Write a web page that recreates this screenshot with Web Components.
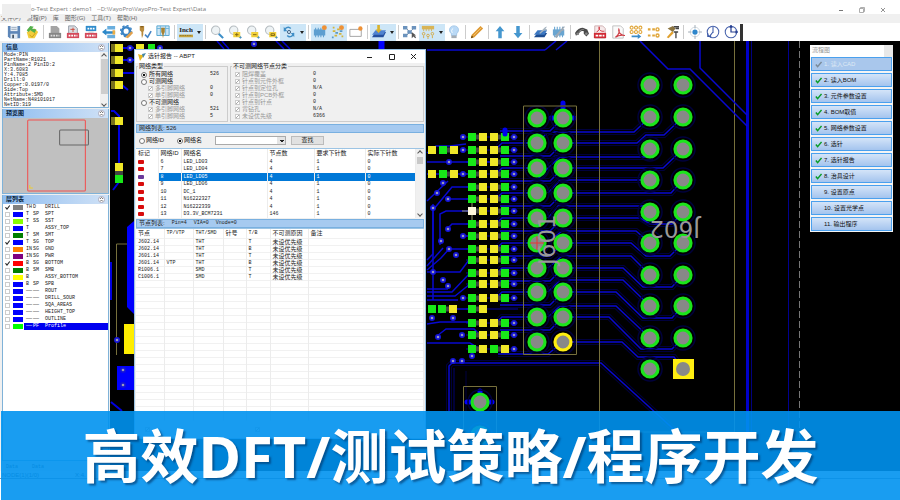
<!DOCTYPE html>
<html>
<head>
<meta charset="utf-8">
<title>VayoPro-Test Expert</title>
<style>
html,body{margin:0;height:100%;overflow:hidden}
body{font-family:"Liberation Sans","Noto Sans CJK SC",sans-serif;font-size:6px;line-height:7px;color:#222;background:#fff}
</style>
</head>
<body>
<app-shell>
  <tool-bar slot="tools"></tool-bar>
  <side-bar slot="side"></side-bar>
  <pcb-board slot="board">
    <net-dialog></net-dialog>
    <flow-panel></flow-panel>
  </pcb-board>
  <promo-banner slot="banner">高效DFT/测试策略/程序开发</promo-banner>
</app-shell>
<script>
const define = (name, html) => customElements.define(name, class extends HTMLElement {
  connectedCallback() {
    if (this.shadowRoot) return;
    const root = this.attachShadow({mode: 'open'});
    root.innerHTML = typeof html === 'function' ? html(this) : html;
  }
});

/* Shared look of small radios, tick boxes and monospaced runs */
const base = `
*{box-sizing:border-box}
button,select,input{font:inherit;color:inherit;margin:0;padding:0}
input{appearance:none;flex:none;width:6px;height:6px;background:#fff;border:1px solid #777}
input[type=radio]{border-radius:50%}
input[type=radio]:checked{background:radial-gradient(#111 40%,#fff 50%)}
.mono{font-family:"Liberation Mono","Noto Sans CJK SC",monospace;font-size:5px}
`;

const glass = (extra = '') => `<path d="M10 10l5 5" stroke="#3d8fc8" stroke-width="2.4"/><circle cx="6.5" cy="6" r="4.8" fill="#eef3f5" stroke="#b5bcc0" stroke-width="1.2"/>${extra}`;
const tag = t => `<path d="M6 8h8v6H6z" fill="#f0cf3a"/><path d="${t}" stroke="#7a6210" fill="none"/>`;
const icons = {
  save: '<path d="M1 1h14v14H3l-2-2z" fill="#5d86b8"/><path d="M4 1h8v6H4z" fill="#e8eef6"/><path d="M4 10h8v5H4z" fill="#dfe8f2"/><path d="M5 3h6M5 5h6" stroke="#9ab"/><path d="M6 11h2v4H6z" fill="#456"/>',
  open: '<path d="M2 8l9-4 4 4-4 7H4z" fill="#f2cd3c"/><path d="M2 6l4-5 4 1-2 2 5 1-2 4-5-3-2 2z" fill="#53b04b"/><path d="M5 11l3 3 4-5" stroke="#c89a18" fill="none"/>',
  doc: '<path d="M3 1h7l3 3v6H3z" fill="#a4a4a4"/><path d="M1 9h14v6H1z" fill="#858585"/><path d="M3 12h10" stroke="#ddd" stroke-width="2" stroke-dasharray="2 1"/>',
  cad: '<path d="M3 1h7l3 3v6H3z" fill="#d9dde2" stroke="#8b95a0"/><path d="M5 5h5M8 3v5" stroke="#c43"/><path d="M1 9h14v6H1z" fill="#d44a5c"/><path d="M3 12h10" stroke="#fff" stroke-width="2" stroke-dasharray="2 1"/>',
  cad2: '<path d="M2 1h12v6H2z" fill="#2f8ccc"/><path d="M4 4h8" stroke="#fff" stroke-width="2" stroke-dasharray="2 1"/><path d="M5 7h6v3H5z" fill="#d9dde2"/><path d="M1 9h14v6H1z" fill="#d44a5c"/><path d="M3 12h10" stroke="#fff" stroke-width="2" stroke-dasharray="2 1"/>',
  flow: '<path d="M6 1h9v4H6zM6 11h9v4H6z" fill="#69aede"/><path d="M0 8l5-4v3h10v3H5v2z" fill="#2c88c9"/><path d="M12 6h3v5h-3z" fill="#e9ad45"/>',
  gear: '<circle cx="7" cy="7" r="4.4" fill="none" stroke="#3a83c4" stroke-width="3"/><circle cx="7" cy="7" r="6.3" fill="none" stroke="#3a83c4" stroke-width="1.6" stroke-dasharray="2.5 2.4"/><path d="M6 14l7-7 2 2-6 6z" fill="#e3a04a"/>',
  pin: '<path d="M2 1h5v5l-1 2v3l-1.500 4L4 11V8L2 6z" fill="#b88a3c"/><path d="M3 2h3" stroke="#6b4a12"/><path d="M8 11l3 3 4-7" fill="none" stroke="#4383c5" stroke-width="1.800"/>',
  pins: '<path d="M1 1h14v11H1z" fill="#cfe6f5" stroke="#4aa0ce"/><path d="M1 4h14M5 1v11M11 1v11" stroke="#69b3da"/><path d="M6 3h4v5l-1 2-1 5-1-5-1-2z" fill="#a88232"/>',
  inch: '<text x="8" y="8" text-anchor="middle" font-family="Liberation Serif" font-weight="bold" font-size="8" fill="#222">Inch</text><path d="M0 11h16v3H0z" fill="#c8a43c"/><path d="M1 12h14" stroke="#7e6c28" stroke-dasharray="1 1"/>',
  zoom: glass(), zoomIn: glass(tag('M8 11h4M10 9v4')), zoomOut: glass(tag('M8 11h4')), zoomFit: glass(tag('M8 10h4v2H8z')),
  rotate: '<path d="M3 7a4 4 0 017-3M13 9a4 4 0 01-7 3" fill="none" stroke="#3f8ec7" stroke-width="1.600"/><path d="M2 2v5h4zM14 14V9h-4z" fill="#3f8ec7"/><circle cx="8" cy="8" r="1.800" fill="none" stroke="#357"/>',
  chip: '<path d="M1 5h13v7H1z" fill="#5e9fd0"/><path d="M3 3v11M6 3v11M9 3v11M12 5v9" stroke="#5e9fd0" stroke-width="1.200"/><circle cx="13" cy="3" r="2.800" fill="#ee9136"/>',
  dots: '<path d="M2 7h3M7 5h3M4 12h3M9 10h3M12 13h2M2 3h2" stroke="#d4b53c" stroke-width="2"/><path d="M5 9h3M10 7h3M1 14h2" stroke="#5c9ac6" stroke-width="2"/><circle cx="12" cy="3" r="2.800" fill="#ee9136"/>',
  frame: '<path d="M1 5h13v8H1z" fill="#fff" stroke="#9a9a9a"/><circle cx="13" cy="4" r="2.500" fill="#ee9136"/>',
  layers: '<path d="M4 8h12l-3 6H0z" fill="#234f9e"/><path d="M4 6h12l-3 5H0z" fill="#4f83d0"/><path d="M6 0h3v5h2L7.500 9 4 5h2z" fill="#d8b22c"/>',
  nodes: '<path d="M3 3l10 10M13 3L3 13" stroke="#7b8794"/><path d="M0 1h5v4H0zM10 1h5v4h-5zM0 10h5v4H0zM5 6h5v4H5z" fill="#6b93bd"/><path d="M10 8v7l2-2 2 2 1-1-2-2h2z" fill="#555"/>',
  probes: '<path d="M1 1h14v4H1z" fill="#d8b456"/><path d="M3 4v3M6 4v3M9 4v3M12 4v3" stroke="#d8b456"/><g fill="none" stroke="#d4a63c"><circle cx="3" cy="10" r="1.500"/><circle cx="8" cy="12" r="1.500"/><circle cx="13" cy="10" r="1.500"/><path d="M3 12v3M8 14v2M13 12v3"/></g>',
  bulb: '<path d="M5 10C1 6 3 1 8 1s7 5 3 9v2H5z" fill="#b9d9f6" stroke="#9cc2e6"/><path d="M7 4c-2 1-2 3-1 5" stroke="#fff" fill="none"/><path d="M5 12h6v3H5z" fill="#a4acb4"/>',
  pencil: '<path d="M2 11L12 1l3 3L5 14l-4 1z" fill="#dd9832"/><path d="M4 12l9-9" stroke="#f6c873"/><path d="M1 15l1-3 2 2z" fill="#67450f"/>',
  up: '<path d="M8 1l5 6h-3v8H6V7H3z" fill="#4597cf"/>',
  down: '<path d="M8 15l5-6h-3V1H6v8H3z" fill="#4597cf"/>',
  board: '<path d="M4 9h11l-3 5H0z" fill="#1c4c91"/><path d="M4 6h11l-3 5H0z" fill="#3c78c2"/><path d="M6 9l6-6a3 3 0 013-1l-2 2 2 1a3 3 0 01-3 1l-5 4z" fill="#a6b4c0"/>',
  board2: '<path d="M1 5h13v7H1z" fill="#69a5d1"/><path d="M3 2v12M6 2v12M9 2v12M12 2v12" stroke="#69a5d1" stroke-width="1.200"/><path d="M3 13l8-9a3 3 0 014-2l-2 2 1 2-3 1-6 8z" fill="#9caab7"/>',
  find: '<path d="M0 9c2-4 6-6 9-6l5 2 2 5-3 3-3-3V7c-3-1-5 1-6 4l-3 1z" fill="#4a4a4a"/><path d="M4 8c2-2 4-3 6-3" stroke="#999" fill="none"/><circle cx="3" cy="10" r="1.500" fill="#888"/><circle cx="13" cy="10" r="1.500" fill="#888"/>',
  pdf: '<path d="M2 1h9l3 3v11H2z" fill="#f6e9ea" stroke="#c9a9aa"/><path d="M1 9h14v6H1z" fill="#d02a34"/><path d="M4 8c3-1 4-5 3-6-1 3 2 6 6 5" fill="none" stroke="#d02a34"/><path d="M3 12h10" stroke="#fff" stroke-width="2" stroke-dasharray="3 1"/>',
  pdf2: '<path d="M2 1h9l3 3v11H2z" fill="#fafafa" stroke="#bbb"/><path d="M5 14c4-2 5-7 4-9-1 4 3 7 7 7-5-1-8 0-11 2z" fill="none" stroke="#cc3a42" stroke-width="1.300"/>',
  ring: '<g fill="none" stroke="#e0a63a" stroke-width="1.300"><circle cx="3" cy="3" r="1.700"/><circle cx="8" cy="3" r="1.700"/><circle cx="13" cy="3" r="1.700"/><circle cx="3" cy="8" r="1.700"/><circle cx="8" cy="8" r="1.700"/><circle cx="13" cy="8" r="1.700"/></g><path d="M3 12h7v-2l4 3-4 3v-2H3z" fill="#3a8cc8"/>',
  match: '<g fill="none" stroke="#e0a63a" stroke-width="1.600"><circle cx="12" cy="5" r="1.700"/><circle cx="12" cy="12" r="1.700"/><path d="M1 5h3M6 5h3M1 12h3M6 12h3" stroke-width="2.400"/></g>',
  tool: '<path d="M2 14l6-7 2 2-6 6z" fill="#e0a02e"/><path d="M3 4l6-3 3 3-3 4z" fill="#8b7440"/><path d="M10 2h6M12 4h4M10 8h5M12.500 8v7" stroke="#444" stroke-width="1.500"/>',
  target: '<circle cx="8" cy="8" r="5.500" fill="none" stroke="#ccd4da"/><circle cx="8" cy="8" r="3" fill="#2e86cb"/><path d="M8 0v4M8 12v4M0 8h4M12 8h4" stroke="#9aa6b0"/>',
  compass: '<circle cx="8" cy="8" r="6.600" fill="none" stroke="#4a65ad" stroke-width="1.200"/><path d="M8 2v7M8 8l-4 5M2 9v4h4" fill="none" stroke="#3a59a8" stroke-width="1.200"/>',
  axis: '<circle cx="8" cy="8" r="6.600" fill="none" stroke="#4a65ad" stroke-width="1.200"/><path d="M8 0v8h8" fill="none" stroke="#263f90" stroke-width="1.400"/><path d="M6 3l2-3 2 3zM13 6l3 2-3 2z" fill="#263f90"/>'
};

define('tool-button', el => {
  const name = el.getAttribute('icon');
  return `<style>${base}
  :host{display:flex;flex:none;height:17px}
  :host([active]){background:#cde6f7}
  button{border:0;background:none;display:grid;place-items:center}
  .main{width:18px}.more{width:8px}
  svg{display:block;width:14px;height:14px}
  .more svg{width:4px;height:3px}</style>
  <button class="main" aria-label="${name}"><svg viewBox="0 0 16 16">${icons[name]}</svg></button>
  ${el.hasAttribute('menu') ? `<button class="more" aria-label="${name} options"><svg viewBox="0 0 4 3"><path d="M0 0h4L2 3z" fill="#222"/></svg></button>` : ''}`;
});

define('tool-bar', () => {
  const items = 'save open | doc cad cad2 flow gear pin pins | inch*+ | zoom zoomIn zoomOut zoomFit rotate*+ | chip* dots* frame | layers*+ | nodes probes*+ bulb | pencil | up down | board board2 | find pdf pdf2 ring match tool | target compass axis'.split(' ');
  return `<style>${base}
  :host{display:flex;background:#fff;border-bottom:1px solid #888;padding-left:5px;height:18px;overflow:hidden;align-items:center}
  i{flex:none;width:1px;height:14px;background:#ccc;margin:0 2px}
  b{flex:none;width:3px;height:17px;background:#333}</style>` +
  items.map(i => i === '|' ? '<i></i>' : `<tool-button icon="${i.replace(/[*+]/g, '')}"${i.includes('*') ? ' active' : ''}${i.includes('+') ? ' menu' : ''}></tool-button>`).join('') + '<b></b>';
});

define('side-section', el => `<style>${base}
  :host{display:flex;flex-direction:column;min-height:0;border:1px solid #7fb2d8;border-top:0}
  header{display:flex;flex:none;align-items:center;justify-content:space-between;height:9px;padding:0 3px;background:linear-gradient(90deg,#8fbdf0,#cfe1f6)}
  h2{margin:0;font-size:6px;line-height:9px;color:#0a1e3a}
  button{width:7px;height:7px;border:1px solid #aab;border-radius:50%;background:#fff;display:grid;place-items:center}
  svg{width:3px;height:5px}
  .body{flex:1;min-height:0;display:flex;flex-direction:column;background:#fff}</style>
  <header><h2>${el.getAttribute('heading')}</h2><button aria-label="collapse"><svg viewBox="0 0 3 5"><path d="M0 2l1.500-1.500L3 2M0 4.500L1.500 3 3 4.500" fill="none" stroke="#444" stroke-width=".7"/></svg></button></header>
  <div class="body"><slot></slot></div>`);

define('layer-list', () => {
  const layers = [['#808080','TH','D','DRILL',1],['#00f','T','SP','SPT'],['#8f0','T','SS','SST'],['#00f','T','','ASSY_TOP'],['#007f00','T','SM','SMT'],['#00f','T','SG','TOP',1],['#ff8000','IN','SG','GND'],['#800080','IN','SG','PWR'],['#f00','B','SG','BOTTOM',1],['#007f00','B','SM','SMB'],['#ff0','B','','ASSY_BOTTOM'],['#00f','B','SP','SPB'],['#00f','——','——','ROUT'],['#00f','——','——','DRILL_SOUR'],['#00f','——','——','SQA_AREAS'],['#00f','——','——','HEIGHT_TOP'],['#00f','——','——','OUTLINE'],['#0f0','——','PF','Profile',0,1]];
  return `<style>${base}
  :host{display:block;flex:1}
  ul{margin:0;padding:0;list-style:none}
  label{display:grid;grid-template-columns:9px 10px 1fr;align-items:center;height:7px;gap:1px}
  input{width:5px;height:5px;border-color:#ccc;justify-self:center}
  input:checked{border:0;background:#222;clip-path:polygon(0 50%,20% 40%,40% 65%,90% 0,100% 20%,40% 100%)}
  .sw{height:5px}
  .t{display:grid;grid-template-columns:7px 12px 1fr;padding-left:2px;line-height:7px}
  .sel{background:#0000f0;color:#fff}</style><ul class="mono">` +
  layers.map(([c, a, b, n, on, sel]) => `<li><label><input type="checkbox"${on ? ' checked' : ''}><span class="sw" style="background:${c}"></span><span class="t${sel ? ' sel' : ''}"><span>${a}</span><span>${b}</span><span>${n}</span></span></label></li>`).join('') + '</ul>';
});

define('side-bar', () => {
  const info = ['Mode:PIN','PartName:R1021','PinName:2 PinID:2','X:3.6083','Y:4.7085','Drill:0','Copper:0.0197/0','Side:Top','Attribute:SMD','NetName:N48101017','NetID:319'];
  return `<style>${base}
  :host{display:flex;flex-direction:column;gap:1px;width:107px;background:#f0f0f0;padding:2px 1px 0 2px;height:100%}
  .info{height:65px}.map{height:85px}.layers{flex:1}
  .rows{display:grid;grid-template-columns:1fr 8px;min-height:0;overflow:hidden;flex:1}
  .rows .mono{padding-top:1px}
  .rows p{margin:0;padding-left:1px;line-height:5px;white-space:nowrap}
  .bar{display:flex;flex-direction:column;align-items:center;justify-content:space-between;background:#f0f0f0;padding:2px 0}
  .bar::before,.bar::after{content:"";width:3px;height:3px;border:solid #555;border-width:1px 0 0 1px;rotate:45deg}
  .bar::after{rotate:225deg}
  .bar span{flex:1;width:7px;background:#cdcdcd;margin:1px 0 8px}
  svg{display:block;width:100%;height:100%;background:#c0c0c0}
  nav{display:flex;gap:14px;padding:0 4px;height:11px;align-items:center}
  nav a{color:#345;text-decoration:none}</style>
  <side-section class="info" heading="信息"><div class="rows"><div class="mono">${info.map(t => `<p>${t}</p>`).join('')}</div><div class="bar"><span></span></div></div></side-section>
  <side-section class="map" heading="预览图"><svg viewBox="0 0 102 75" preserveAspectRatio="none"><rect x="24" y="2" width="56" height="71" rx="1" fill="none" stroke="#f05050"/><rect x="55" y="12" width="28" height="15" rx="1" fill="none" stroke="#666"/><path d="M26 67v3h3" fill="none" stroke="#ec3"/></svg></side-section>
  <side-section class="layers" heading="层列表"><layer-list></layer-list></side-section>
  <nav class="mono"><a href="#layer">Data</a><a href="#data">Data</a></nav>`;
});

/* Board drawing; coordinates are those of the whole window */
define('pcb-board', () => {
  let s = '';
  const box = (x, y, c) => `<rect x="${x - 4}" y="${y - 4}" width="8" height="8" fill="${c}"/>`;
  const G = '#18e818', Y = '#f0e828';
  const via = (x, y) => `<circle cx="${x}" cy="${y}" r="3" fill="#1414d8"/><circle cx="${x}" cy="${y}" r="1.300" fill="#99b"/>`;
  const pair = (x, y, a, b) => `<path d="M${x + 4} ${y}h4" stroke="#444" stroke-width="5"/>` + box(x, y, a) + box(x + 11, y, b);
  const line = (d, w = 1.5, c = '#0808d0') => `<path d="${d}" fill="none" stroke="${c}" stroke-width="${w}"/>`;
  const halo = d => line(d, 6, '#00003c') + line(d, 4, '#000') + line(d);
  const rows = [137,150,162,174,187,199,211,224,236,249,260,273,284,298,309,323,335,349];
  const pads = [118,143,168,193,218,243,268,292,317,342];
  const far = [85,117,149,180,212,243,275,306,338,369];
  /* connector to connector traces */
  ['M537 143L548 132H634L650 117','M563 143H637L646 135H664L683 117','M510 156H548L560 156',
   'M537 180L558 157','M548 168L560 157H650L650 149','M563 168H663L683 149','M548 193L560 180H650','M563 193H671L683 180',
   'M548 218L558 206H650','M563 218H640L650 224H672L683 212','M548 242L562 231H636L650 243','M563 243H631L646 256H670L683 243',
   'M548 268L562 256H631L650 275','M563 268H623L643 287H672L683 275','M548 292L560 280H623L650 306','M563 292H616L643 318H672L683 306',
   'M548 317L560 306H616L650 338','M563 317H609L641 349H672L683 338','M563 342H622L638 357H674L683 368',
   'M498 354H548L563 342'].forEach(d => s += halo(d));
  /* fan-out from the resistor columns */
  pads.forEach((y, i) => { if (i && i < 9) s += halo(`M498 ${y + 4}L502 ${y}H536`); if (i < 9) s += halo(`M500 ${y + 13}H550L563 ${y}`); });
  rows.forEach(y => s += line(`M466 ${y}H518`, 1.2, '#0505a0'));
  ['M427 153L436 146H450L466 144', 'M427 162H505', 'M427 174H470', 'M427 201L448 181', 'M433 204V300', 'M427 260L433 254V210L452 187H470',
    'M440 245V214L446 211H470', 'M427 270L441 258L449 249H470','M427 266L443 248','M427 272H460L469 260','M427 292H452L470 273','M427 296H455L470 284','M427 300H458',
    'M427 324L440 322H470','M437 336L446 329H474L480 335','M427 343H470L480 349','M427 289L448 289','M448 199H470','M448 228L452 224H470','M462 236H470','M449 309H480'].forEach(d => s += line(d));
  s += halo('M449 411V366L452 363H601L680 435') + line('M454 411V368', 1, '#000070');
  s += line('M466 411V371', 1, '#000040');
  rows.forEach((y, i) => {
    s += pair(472, y, G, Y);
    if (i === 14) return;
    s += pair(494, y, i === 17 ? G : Y, i === 17 ? Y : G) + via(514, y);
  });
  [150,174].forEach(y => s += box(432, y, Y) + pair(443, y, G, Y) + via(463, y));
  s += box(432, 309, G) + pair(442, 309, G, Y) + via(432, 318) + via(453, 318);
  s += box(472, 211, '#fff8dc') + line('M462 211H468M472 203V207M472 215V220', 1, '#996');
  [[463,137],[449,162],[443,183],[437,193],[433,208],[448,199],[448,229],[441,241],[463,236],[449,249],[456,255],[433,272],[443,280],[448,286],[463,298],[438,337],[462,335],[472,356],[453,361],[462,361]].forEach(p => s += via(...p));
  s += '<path d="M505 130v4M563 103v8M551 118h23" stroke="#00e" stroke-width="5" stroke-linecap="round"/>';
  const pad = (x, y, c = '#1be51b') => `<circle cx="${x}" cy="${y}" r="12" fill="none" stroke="#00003c" stroke-width="1.500"/><circle cx="${x}" cy="${y}" r="8" fill="#888" stroke="${c}" stroke-width="3.200"/>`;
  pads.forEach((y, i) => s += pad(537, y) + pad(563, y, i === 9 ? '#ffee10' : undefined));
  far.forEach((y, i) => s += pad(650, y) + (i < 9 ? pad(683, y) : `<rect x="673" y="359" width="21" height="20" fill="#fe1"/><circle cx="683" cy="369" r="7" fill="#888"/>`));
  s += line('M530 243h14M537 236v14', 1, '#e33');
  s += '<path d="M467 402h25M480 391v12" stroke="#00f" stroke-width="5" stroke-linecap="round"/>' + pad(480, 402) + pad(480, 435);
  const olive = '#77703c';
  s += line('M523.500 354.500V106H576.500V354.500zM463.500 440V386.500H496.500V440M599.500 41V432H734.500V41', 1, olive);
  s += line('M747.500 41V440', 3, '#0000c8') + line('M751.500 41V440', 1, '#000080') + line('M788.500 41V440', 1, '#000090');
  s += '<path d="M799.500 41V470" stroke="#777" stroke-dasharray="7 3"/>';
  /* upper right diagonals */
  ['M545 50L556 41', 'M556 50L567 41', 'M427 50H520L545 50','M700 41V68L747 115','M640 41L668 69H690L747 126'].forEach(d => s += line(d));
  /* left strip */
  ['M111 48H134','M111 60H134','M111 73H134','M111 85H122L128 90','M111 111H114L119 116V165','M113 190L119 182M111 402L122 411','M111 262V300'].forEach(d => s += line(d, 2, '#0000e0'));
  [48,60,73,85,121].forEach(y => s += `<rect x="111" y="${y - 4}" width="4" height="8" fill="#77701c"/>` + box(119, y, Y));
  s += via(130, 48) + via(130, 60) + box(119, 167, Y) + '<path d="M115 171h8v4h-8z" fill="#444"/>' + box(119, 179, G);
  s += line('M134 244H116.500V355', 1, olive) + '<path d="M134 221l-7 6v80l7 7zM117 366h17v24h-17z" fill="#00f"/><path d="M124 324h10v30h-10z" fill="#fe0"/>' + via(117, 340) + via(123, 370) + via(123, 385);
  s += line('M217 41L224 49M222 41L229 49M276 41L284 49M282 41L290 49', 1.5, '#00c') + line('M381.500 41V49', 6, '#00f') + via(254, 44) + via(160, 48) + '<path d="M136 44h8v5h-8z" fill="#f0e828"/><path d="M148 44h7v5h-7z" fill="#18e818"/>';
  return `<style>:host{display:block;position:relative;overflow:hidden;background:#000;height:100%}
  .art{display:block;width:100%;height:100%}
  ::slotted(net-dialog){position:absolute;left:24px;top:8px}
  ::slotted(flow-panel){position:absolute;right:7px;top:4px}</style>
  <svg class="art"><g transform="translate(-110 -41)">${s}
  <g font-family="DejaVu Sans" font-size="23" fill="#999"><text transform="translate(700 221) rotate(180)">J602</text><text transform="translate(555 265) rotate(-90)">J601</text></g></g></svg><slot></slot>`;
});

define('net-dialog', () => {
  const opt = (type, txt, val, cls = '', on = 1) => `<div class="row ${cls}"><label><input type="${type}" ${type === 'radio' ? 'name="kind"' : 'disabled'}${on ? ' checked' : ''}>${txt}</label><span class="mono">${val}</span></div>`;
  const nets = [[6,'LED_LD03',4],[7,'LED_LD04',4],[8,'LED_LD05',4],[9,'LED_LD06',4],[10,'DC_1',4],[11,'N16222327',4],[12,'N16222339',4],[13,'D3.3V_BCM7231',146]];
  const nodes = [['J602.14','','THT','','T'],['J602.14','','THT','','B'],['J601.14','','THT','','T'],['J601.14','VTP','THT','','B'],['R1006.1','','SMD','','T'],['C1006.1','','SMD','','T']];
  return `<style>${base}
  :host{display:flex;flex-direction:column;width:292px;box-sizing:border-box;background:#f0f0f0;border:1px solid #9cc4e4;color:#222}
  .title{display:flex;align-items:center;height:13px;background:#fff;padding:0 1px 0 3px;gap:2px}
  .title svg{width:8px;height:8px}.title b{flex:1;font-weight:400}
  .title button{width:20px;height:12px;border:0;background:none;display:grid;place-items:center}
  .groups{display:grid;grid-template-columns:92px 1fr;gap:2px;padding:0 1px}
  fieldset{margin:0;padding:1px 3px 1px 4px;border:1px solid #ccc;min-width:0}
  legend{padding:0 1px;margin-left:-3px;line-height:7px}
  .row{display:flex;height:7px;align-items:center}
  .row label{display:flex;align-items:center;gap:2px;width:69px;white-space:nowrap}
  .sub label{padding-left:7px;color:#999}
  .wide label{width:78px}
  .wide.sub label{padding:0}
  input[type=checkbox]{width:5px;height:5px;border-color:#ccc;background:linear-gradient(135deg,#fff 35%,#aaa 40% 60%,#fff 65%)}
  h3{margin:2px 1px 0;height:9px;line-height:7px;border:1px solid #79b0e0;background:#a6caf0;font-size:6px;font-weight:400;padding-left:2px}
  h3.mono{display:flex;gap:7px;margin-top:1px;font-size:5px}
  .cj{font-family:"Liberation Sans","Noto Sans CJK SC",sans-serif;font-size:6px}
  .find{display:flex;align-items:center;height:15px;padding:0 4px}
  .find label{display:flex;align-items:center;gap:1px;width:38px}
  select{appearance:none;width:71px;height:9px;border:1px solid #aaa;background:linear-gradient(#222,#222) 64px 3px/4px 1px no-repeat,linear-gradient(#222,#222) 65px 4px/2px 1px no-repeat,linear-gradient(#e4e4e4,#e4e4e4) right/8px 100% no-repeat,#fff}
  .find button{width:33px;height:9px;margin-left:5px;border:1px solid #bbb;background:#e1e1e1;line-height:7px}
  .list{display:grid;grid-template-columns:1fr 8px;background:#fff;margin:0 1px;border-top:1px solid #9cc4e4}
  table{border-collapse:collapse;table-layout:fixed;width:100%;background:#fff}
  th{font-weight:400;text-align:left;height:9px;padding:0 0 0 2px;font-size:6px;line-height:7px;white-space:nowrap}
  td{padding:0 0 0 2px;line-height:6px;height:7px;font-size:5px;white-space:nowrap}
  th,td{border-right:1px solid #ececec}
  .nets{height:69px}.nets td{height:auto}
  .nets i{display:block;width:6px;height:4px;border-radius:1px;background:#d80c0c}
  .sel td{background:#0078d7;color:#fff}.sel td:first-child{background:#fff}.sel i{background:#6a3a9a}
  .nodes{margin:0 1px;background:#fff;border-top:1px solid #9cc4e4}
  .nodes tr{border-bottom:1px solid #f1f1f1}
  .nodes th.mono{font-size:5px}
  .nodes td.cj{font-size:6px}
  .sb{background:#f0f0f0;display:flex;flex-direction:column;align-items:center;padding:2px 0}
  .sb::before,.sb::after{content:"";width:3px;height:3px;border:solid #555;border-width:1px 0 0 1px;rotate:45deg}
  .sb::after{rotate:225deg;margin-top:auto}
  .sb span{width:6px;height:7px;background:#c8c8c8;margin-top:2px}
  footer{display:flex;gap:105px;padding:6px 10px}</style>
  <div class="title"><svg viewBox="0 0 8 8"><path d="M0 1l3 1 4-1-3 4-2 3z" fill="#e8b820"/><path d="M4 1l4-1-3 5z" fill="#48a"/></svg><b>选针报告 -- ABPT</b>
  <button aria-label="minimize"><svg viewBox="0 0 8 8"><path d="M1 4.500h5" stroke="#222"/></svg></button><button aria-label="maximize"><svg viewBox="0 0 8 8"><path d="M1.500 1.500h5v5h-5z" fill="none" stroke="#222"/></svg></button><button aria-label="close"><svg viewBox="0 0 8 8"><path d="M1 1l5 5M6 1L1 6" stroke="#222"/></svg></button></div>
  <div class="groups"><fieldset><legend>网络类型</legend>${opt('radio','所有网络',526)}${opt('radio','可测网络','','',0)}${opt('checkbox','多引脚网络',0,'sub')}${opt('checkbox','单引脚网络',0,'sub')}${opt('radio','不可测网络','','',0)}${opt('checkbox','多引脚网络',521,'sub')}${opt('checkbox','单引脚网络',5,'sub')}</fieldset>
  <fieldset><legend>不可测网络节点分类</legend>${[['阻焊覆盖',0],['针点到元件外框',0],['针点到定位孔','N/A'],['针点到PCB外框',0],['针点到针点',0],['背钻孔','N/A'],['未设优先级',6366]].map(r => opt('checkbox', r[0], r[1], 'wide sub')).join('')}</fieldset></div>
  <h3>网络列表: 526</h3>
  <div class="find"><label><input type="radio" name="by">网络ID</label><label><input type="radio" name="by" checked>网络名</label><select aria-label="网络名"><option></option></select><button>查找</button></div>
  <div class="list"><table class="nets"><colgroup><col style="width:22px"><col style="width:23px"><col style="width:86px"><col style="width:47px"><col style="width:51px"><col></colgroup><thead><tr>${['标记','网络ID','网络名','节点数','要求下针数','实际下针数'].map(t => `<th>${t}</th>`).join('')}</tr></thead>
  <tbody class="mono">${nets.map(n => `<tr${n[0] === 8 ? ' class="sel"' : ''}><td><i></i></td><td>${n[0]}</td><td>${n[1]}</td><td>${n[2]}</td><td>1</td><td>0</td></tr>`).join('')}</tbody></table><div class="sb"><span></span></div></div>
  <h3 class="mono"><span class="cj">节点列表:</span><span>Pin=4</span><span>VIA=0</span><span>Vnode=0</span></h3>
  <div class="nodes"><table><colgroup><col style="width:28px"><col style="width:29px"><col style="width:30px"><col style="width:23px"><col style="width:24px"><col style="width:38px"><col></colgroup><thead><tr>${['节点','TP/VTP','THT/SMD','针号','T/B','不可测原因','备注'].map(t => `<th${/^T/.test(t) ? ' class="mono"' : ''}>${t}</th>`).join('')}</tr></thead>
  <tbody class="mono">${nodes.map(n => `<tr>${n.map(c => `<td>${c}</td>`).join('')}<td class="cj">未设优先级</td><td></td></tr>`).join('')}${('<tr>' + '<td></td>'.repeat(7) + '</tr>').repeat(20)}</tbody></table></div>
  <footer><input type="checkbox" aria-label="option 1"><input type="checkbox" aria-label="option 2"></footer>`;
});

define('flow-panel', () => {
  const steps = ['读入CAD','读入BOM','元件参数设置','BOM取值','网络参数设置','选针','选针报告','治具设计','设置原点','设置光学点','输出程序'];
  return `<style>${base}
  :host{display:block;width:83px;background:#f4f4f4;padding-bottom:1px}
  header{display:flex;justify-content:space-between;height:12px;line-height:11px;padding-left:2px;color:#999;background:#fff}
  header button{width:9px;border:0;background:#e8e8e8}
  ol{margin:0;padding:0 1px;list-style:none;display:grid;gap:2px}
  ol button{width:100%;height:14px;display:flex;align-items:center;gap:2px;padding-left:3px;border:1px solid #4aa0ee;background:linear-gradient(#d4e4f8,#a4c4ee);color:#111}
  ol button:disabled{background:#a9c7ec;color:#dfe9f4}
  svg{width:7px;height:7px}</style>
  <header>流程图<button aria-label="close"></button></header><ol>` +
  steps.map((t, i) => `<li><button${i ? '' : ' disabled'}><svg viewBox="0 0 8 8">${i < 8 ? `<path d="M1 4l2 2.500L7.500 1" fill="none" stroke="${i ? '#0a9c28' : '#7a8a98'}" stroke-width="1.700"/>` : ''}</svg>${i + 1}. ${t}</button></li>`).join('') + '</ol>';
});

define('promo-banner', `<style>:host{display:flex;align-items:center;justify-content:center;height:89px;box-sizing:border-box;background:rgba(0,146,239,.9);color:#fff;font:bold 58px/60px "Noto Sans","Noto Sans CJK SC",sans-serif;text-shadow:2px 2px 2px rgba(0,50,100,.6);white-space:nowrap}</style><slot></slot>`);

define('app-shell', `<style>${base}
  :host{display:grid;grid-template-rows:14px 9px 18px minmax(0,1fr) 29px;height:100vh;position:relative;overflow:hidden;background:#fff}
  .title{display:flex;align-items:center;padding:5px 7px 0 31px;color:#777;white-space:pre;font-family:"Open Sans",sans-serif}
  .title span{flex:1}
  .title button{width:21px;height:9px;border:0;background:none;display:grid;place-items:center}
  .title svg{width:6px;height:6px}
  .menu{display:flex;gap:6px;background:#f0f0f0;padding-left:1px;line-height:9px;color:#666}
  .menu button{border:0;background:none;line-height:9px}
  .logo{position:absolute;left:2px;top:4px;width:29px;height:14px;background:#eee}
  .main{display:grid;grid-template-columns:110px minmax(0,1fr);background:#f0f0f0;min-height:0}
  .status{display:flex;gap:36px;padding-left:2px;color:#456;line-height:8px;background:linear-gradient(#f7f7f7 7px,#89a 7px 8px,#fff 8px)}
  .over{position:absolute;left:1px;right:0;bottom:0}</style>
  <div class="title"><span>o-Test Expert : demo1   --D:\\VayoPro\\VayoPro-Test Expert\\Data</span>
  <button aria-label="minimize"><svg viewBox="0 0 6 6"><path d="M1 3.500h4" stroke="#777"/></svg></button><button aria-label="restore"><svg viewBox="0 0 6 6"><path d="M.5 1.500h4v4h-4zM1.500 1.500v-1h4v4h-1" fill="none" stroke="#999" stroke-width=".8"/></svg></button><button aria-label="close"><svg viewBox="0 0 6 6"><path d="M1 1l4 4M5 1L1 5" stroke="#777" stroke-width=".8"/></svg></button></div>
  <div class="menu"><button>文件(F)</button><button>流程(P)</button><button>库</button><button>图形(G)</button><button>工具(T)</button><button>帮助(H)</button></div>
  <div class="logo"></div>
  <slot name="tools"></slot>
  <div class="main"><slot name="side"></slot><slot name="board"></slot></div>
  <div class="status"><span>NODE(1)(1/0)</span><span>X:4.</span></div>
  <div class="over"><slot name="banner"></slot></div>`);
</script>
</body>
</html>
